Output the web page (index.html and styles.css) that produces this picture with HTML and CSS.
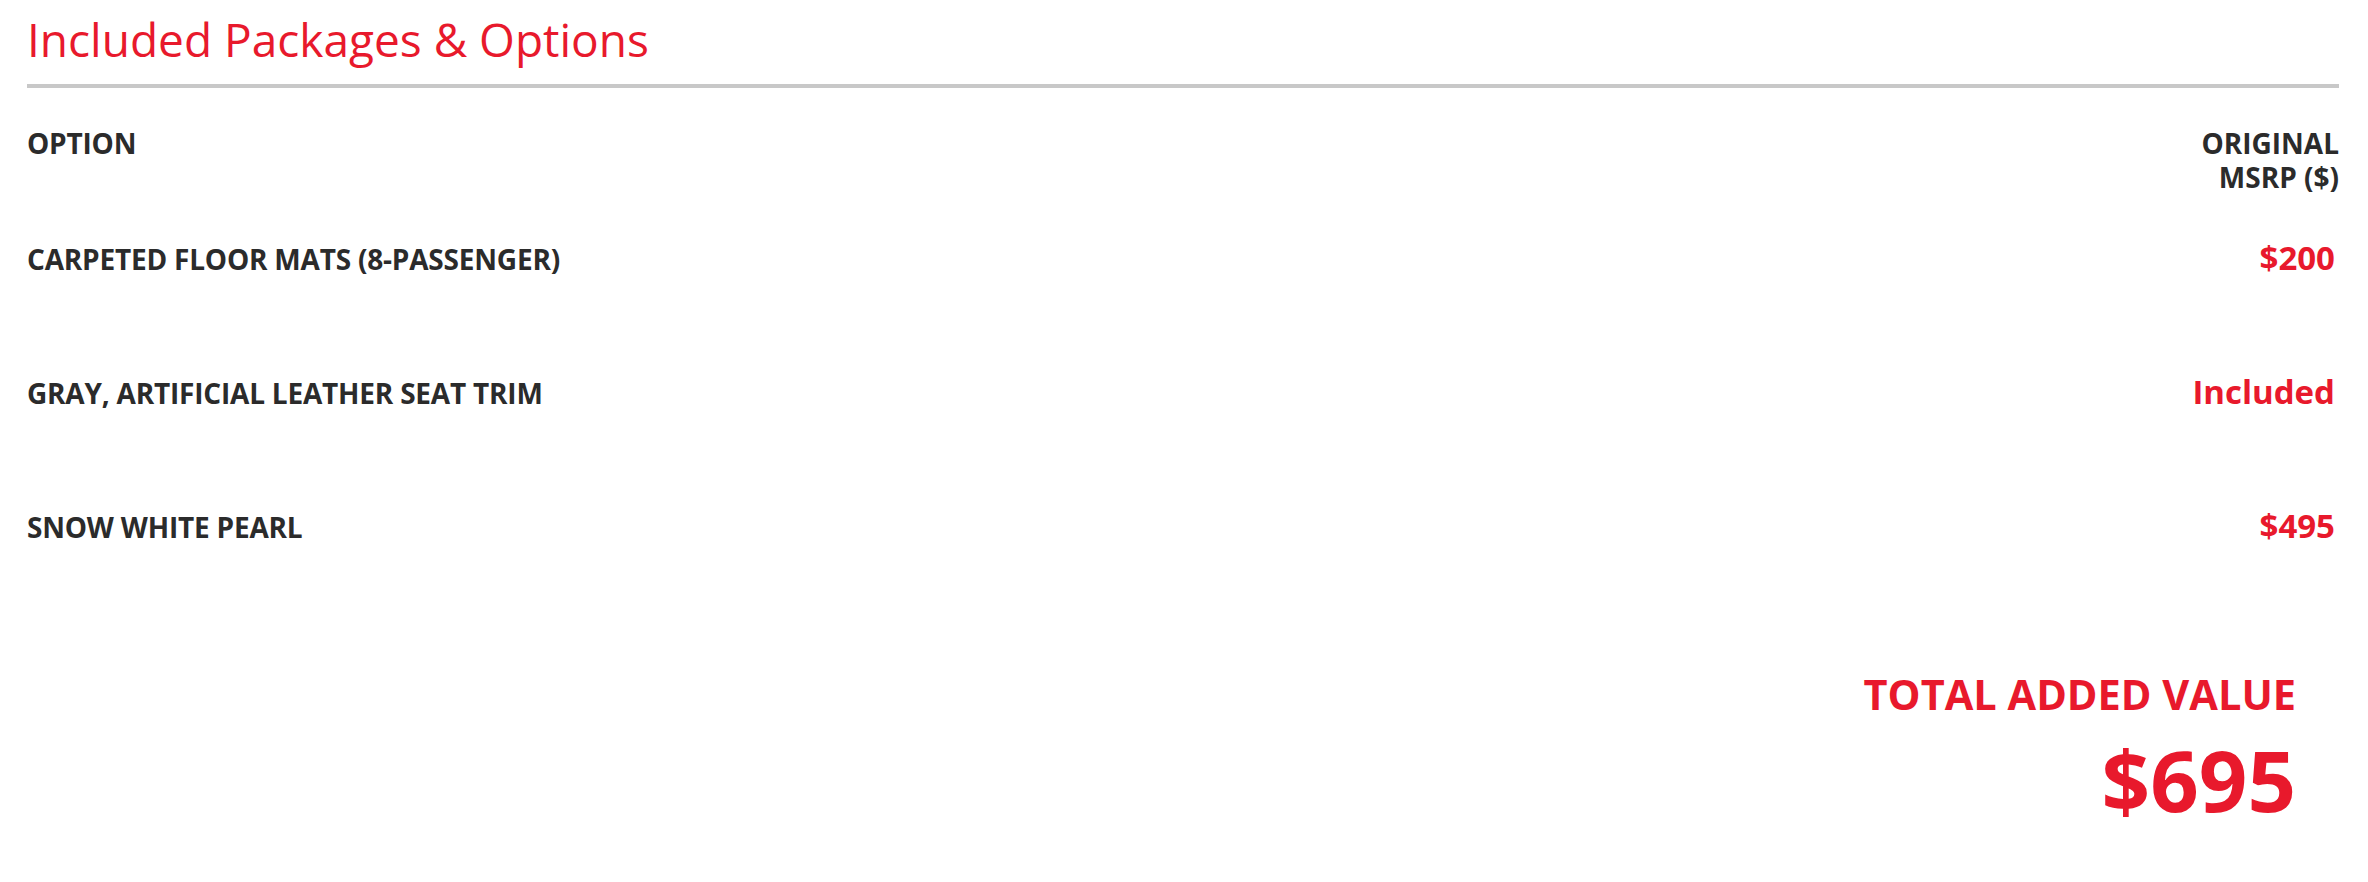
FILE: index.html
```html
<!DOCTYPE html>
<html lang="en">
<head>
    <meta charset="UTF-8">
    <meta name="viewport" content="width=device-width, initial-scale=1.0">
    <title>Included Packages &amp; Options</title>
    <link rel="stylesheet" href="styles.css">
</head>
<body>
    <section class="options">
        <h2 class="options-title">Included Packages &amp; Options</h2>
        <div class="options-table">
            <div class="row head">
                <div class="name">OPTION</div>
                <div class="price">ORIGINAL<br>MSRP ($)</div>
            </div>
            <div class="row">
                <div class="name">CARPETED FLOOR MATS (8-PASSENGER)</div>
                <div class="price">$200</div>
            </div>
            <div class="row">
                <div class="name">GRAY, ARTIFICIAL LEATHER SEAT TRIM</div>
                <div class="price">Included</div>
            </div>
            <div class="row">
                <div class="name">SNOW WHITE PEARL</div>
                <div class="price">$495</div>
            </div>
        </div>
        <div class="total">
            <div class="total-label">TOTAL ADDED VALUE</div>
            <div class="total-value">$695</div>
        </div>
    </section>
</body>
</html>
```

FILE: styles.css
```css
body {
    margin: 0;
    font-family: "Open Sans", "Liberation Sans", sans-serif;
    background-color: #fff;
    color: #2b2b2b;
}
.options {
    padding: 0 29px 0 27px;
}
.options-title {
    margin: 0;
    padding-top: 11px;
    padding-bottom: 17px;
    font-size: 46px;
    font-weight: 400;
    line-height: 56px;
    color: #e8192c;
    border-bottom: 4px solid #c8c8c8;
}
.options-table {
    padding-top: 38px;
}
.row {
    display: flex;
    justify-content: space-between;
    align-items: baseline;
    font-size: 28px;
    font-weight: 700;
    line-height: 33px;
    height: 134px;
}
.row.head {
    height: 115px;
}
.name {
    letter-spacing: -0.2px;
}
.price {
    text-align: right;
    color: #e8192c;
    font-size: 33px;
    padding-right: 4px;
}
.row.head .price {
    color: #2b2b2b;
    font-size: 28px;
    line-height: 34px;
    padding-right: 0;
}
.total {
    text-align: right;
    padding-top: 26px;
    padding-right: 43px;
    color: #e8192c;
    font-weight: 700;
}
.total-label {
    font-size: 41.5px;
    line-height: 50px;
}
.total-value {
    margin-top: 15px;
    font-size: 85px;
    line-height: 90px;
}
```
